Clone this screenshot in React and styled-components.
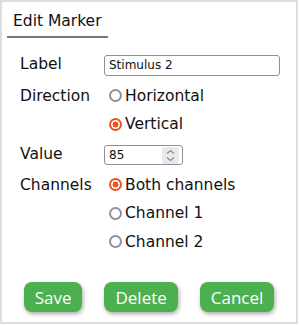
import React, { useState } from "react";
import styled, { createGlobalStyle } from "styled-components";

// plain dialog for editing a marker: label, direction, value, channels

const GlobalStyle = createGlobalStyle`
  body {
    margin: 0;
    background: #fff;
  }
`;

const Panel = styled.div`
  width: 298px;
  height: 324px;
  box-sizing: border-box;
  border: 2px solid #dcdcdc;
  background: #fff;
  font-family: "DejaVu Sans", Verdana, sans-serif;
  color: #111;
`;

const Title = styled.div`
  display: inline-block;
  margin-left: 5px;
  padding: 10px 6px 6px;
  font-size: 15.5px;
  line-height: 18px;
  border-bottom: 2px solid #777;
`;

const Form = styled.div`
  margin: 9px 0 0 18px;
  display: flex;
  flex-direction: column;
`;

const Row = styled.div`
  display: flex;
  align-items: center;
  height: ${(p) => p.$h}px;
`;

const FieldLabel = styled.div`
  width: 84px;
  flex-shrink: 0;
  font-size: 15.5px;
`;

const TextInput = styled.input`
  width: 176px;
  height: 21px;
  margin-top: 3px;
  box-sizing: border-box;
  border: 1px solid #8f8f9d;
  border-radius: 3px;
  padding: 0 4px;
  font-family: "DejaVu Sans", sans-serif;
  font-size: 12px;
  color: #111;
  outline: none;
`;

const NumberBox = styled.div`
  width: 79px;
  height: 20px;
  margin-top: 3px;
  box-sizing: border-box;
  border: 1px solid #8f8f9d;
  border-radius: 3px;
  display: flex;
  align-items: center;
  padding: 0 3px 0 4px;
`;

const NumberField = styled.input`
  flex: 1;
  min-width: 0;
  border: none;
  padding: 0;
  outline: none;
  font-family: "DejaVu Sans", sans-serif;
  font-size: 12px;
  color: #111;
`;

const Spinner = styled.div`
  width: 17px;
  height: 17px;
  background: #e9e9ed;
  border-radius: 2px;
  display: flex;
  align-items: center;
  justify-content: center;
`;

const Option = styled.label`
  display: flex;
  align-items: center;
  gap: 3px;
  margin-left: 5px;
  font-size: 15.5px;
  cursor: pointer;
`;

const Radio = styled.input`
  appearance: none;
  flex-shrink: 0;
  width: 13px;
  height: 13px;
  margin: 0;
  box-sizing: border-box;
  border: 2px solid #8f8f9d;
  border-radius: 50%;
  background: #fff;
  &:checked {
    border-color: #e95420;
    background: radial-gradient(circle, #e95420 0 2.8px, #fff 3.2px);
  }
`;

const Buttons = styled.div`
  margin-top: 26px;
  display: flex;
  justify-content: center;
  gap: 22px;
`;

const Button = styled.button`
  height: 30px;
  padding: 0 11px;
  border: none;
  border-radius: 8px;
  background: #4caf50;
  color: #fff;
  font-family: "Open Sans", "Noto Sans", sans-serif;
  font-size: 17px;
  box-shadow: 1px 2px 4px rgba(0, 0, 0, 0.35);
  cursor: pointer;
`;

function Choice({ name, value, current, onPick, children }) {
  return (
    <Option>
      <Radio
        type="radio"
        name={name}
        checked={current === value}
        onChange={() => onPick(value)}
      />
      {children}
    </Option>
  );
}

export default function App() {
  const [label, setLabel] = useState("Stimulus 2");
  const [value, setValue] = useState("85");
  const [direction, setDirection] = useState("vertical");
  const [channels, setChannels] = useState("both");

  return (
    <>
      <GlobalStyle />
      <Panel>
        <Title>Edit Marker</Title>
        <Form>
          <Row $h={33}>
            <FieldLabel>Label</FieldLabel>
            <TextInput value={label} onChange={(e) => setLabel(e.target.value)} />
          </Row>
          <Row $h={31}>
            <FieldLabel>Direction</FieldLabel>
            <Choice name="dir" value="horizontal" current={direction} onPick={setDirection}>
              Horizontal
            </Choice>
          </Row>
          <Row $h={26}>
            <FieldLabel />
            <Choice name="dir" value="vertical" current={direction} onPick={setDirection}>
              Vertical
            </Choice>
          </Row>
          <Row $h={33}>
            <FieldLabel>Value</FieldLabel>
            <NumberBox>
              <NumberField value={value} onChange={(e) => setValue(e.target.value)} />
              <Spinner>
                <svg width="9" height="13" viewBox="0 0 9 13" fill="none" stroke="#8a8a8a" strokeWidth="1.1">
                  <path d="M1 4.5 L4.5 1.5 L8 4.5" />
                  <path d="M1 8.5 L4.5 11.5 L8 8.5" />
                </svg>
              </Spinner>
            </NumberBox>
          </Row>
          <Row $h={29}>
            <FieldLabel>Channels</FieldLabel>
            <Choice name="ch" value="both" current={channels} onPick={setChannels}>
              Both channels
            </Choice>
          </Row>
          <Row $h={28}>
            <FieldLabel />
            <Choice name="ch" value="1" current={channels} onPick={setChannels}>
              Channel 1
            </Choice>
          </Row>
          <Row $h={29}>
            <FieldLabel />
            <Choice name="ch" value="2" current={channels} onPick={setChannels}>
              Channel 2
            </Choice>
          </Row>
        </Form>
        <Buttons>
          <Button>Save</Button>
          <Button>Delete</Button>
          <Button>Cancel</Button>
        </Buttons>
      </Panel>
    </>
  );
}
